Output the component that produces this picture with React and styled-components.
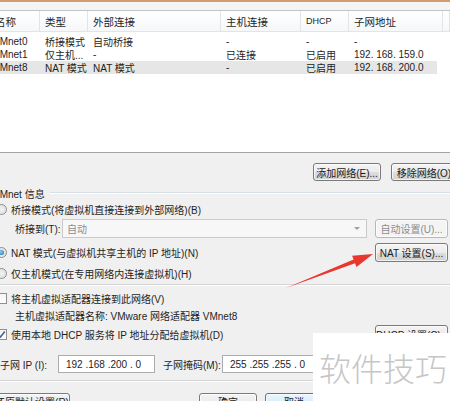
import styled, { createGlobalStyle } from 'styled-components';

const GlobalStyle = createGlobalStyle`
  html, body {
    margin: 0;
    padding: 0;
    background: #f0f0f0;
    overflow: hidden;
  }
`;

const uiFont = `"Liberation Sans", "Noto Sans CJK SC", sans-serif`;

const columns = [
  { title: '名称', width: 52, headPad: 7, pad: 5 },
  { title: '类型', width: 48 },
  { title: '外部连接', width: 133 },
  { title: '主机连接', width: 80 },
  { title: 'DHCP', width: 48, small: true },
  { title: '子网地址', width: 94 },
];

const networks = [
  ['VMnet0', '桥接模式', '自动桥接', '-', '-', '-'],
  ['VMnet1', '仅主机...', '-', '已连接', '已启用', '192. 168. 159.0'],
  ['VMnet8', 'NAT 模式', 'NAT 模式', '-', '已启用', '192. 168. 200.0'],
];

const gridTemplate = columns.map((c) => `${c.width}px`).join(' ') + ' 1fr';

const Window = styled.div`
  position: relative;
  width: 450px;
  height: 401px;
  overflow: hidden;
  background: #f0f0f0;
  font-family: ${uiFont};
  font-size: 10px;
  color: #1e1e1e;
  display: flex;
  flex-direction: column;
`;

const TitleEdge = styled.div`
  height: 2px;
  flex-shrink: 0;
  background: #cf9d70;
`;

const TopGap = styled.div`
  height: 8px;
  flex-shrink: 0;
  background: #f4f4f4;
  border-bottom: 1px solid #c4c4c4;
`;

const ListView = styled.div`
  height: 142px;
  flex-shrink: 0;
  box-sizing: border-box;
  background: #ffffff;
  border-bottom: 1px solid #a3a3a3;
  overflow: hidden;
`;

const HeaderRow = styled.div`
  display: grid;
  grid-template-columns: ${gridTemplate};
  margin-left: -12px;
  height: 20px;
  background: linear-gradient(#ffffff, #f6f7f9);
  border-bottom: 1px solid #e3e4e6;
`;

const HeaderCell = styled.div`
  display: flex;
  align-items: center;
  padding-left: ${(p) => p.$pad ?? 5}px;
  border-right: 1px solid #e3e4e6;
  font-size: ${(p) => (p.$small ? 9 : 10.5)}px;
  white-space: nowrap;
`;

const Rows = styled.div`
  padding-top: 3px;
`;

const DataRow = styled.div`
  display: grid;
  grid-template-columns: ${gridTemplate};
  margin-left: -12px;
  height: 13px;
  background: ${(p) => (p.$selected ? 'linear-gradient(90deg, #e6e6e6 0 449px, transparent 449px)' : 'transparent')};
`;

const Cell = styled.div`
  display: flex;
  align-items: center;
  padding-left: ${(p) => p.$pad ?? 5}px;
  white-space: pre;
  overflow: hidden;
  font-size: 10px;
`;

const Dialog = styled.div`
  display: flex;
  flex-direction: column;
`;

const TopButtons = styled.div`
  display: flex;
  justify-content: flex-end;
  gap: 10px;
  margin-top: 10px;
  margin-right: -7px;
`;

const Button = styled.button`
  flex-shrink: 0;
  width: ${(p) => p.$w}px;
  height: ${(p) => p.$h ?? 18}px;
  padding: 0;
  border-radius: 3px;
  font-family: ${uiFont};
  font-size: 10px;
  white-space: nowrap;
  border: 1px solid ${(p) => (p.$default ? '#3c7fb1' : p.disabled ? '#b5b8bb' : '#7a7a7a')};
  color: ${(p) => (p.disabled ? '#8c8c8c' : '#1a1a1a')};
  background: ${(p) =>
    p.$default
      ? 'linear-gradient(#eaf6fd 0%, #d9f0fc 50%, #bee6fd 51%, #a7d9f5 100%)'
      : p.disabled
      ? '#f4f4f4'
      : 'linear-gradient(#f4f4f4 0%, #ececec 50%, #dedede 51%, #d2d2d2 100%)'};
  box-shadow: inset 0 0 0 1px rgba(255, 255, 255, 0.7);
`;

const Legend = styled.div`
  display: flex;
  align-items: center;
  height: 14px;
  margin-top: 5px;
  margin-left: -7px;

  &::after {
    content: '';
    flex: 1;
    margin-left: 5px;
    height: 1px;
    background: #d5dfe5;
    border-bottom: 1px solid #ffffff;
  }
`;

const OptionRow = styled.div`
  display: flex;
  align-items: center;
  height: ${(p) => p.$h ?? 14}px;
  margin-top: ${(p) => p.$mt ?? 0}px;
  padding-left: ${(p) => p.$indent ?? 0}px;
  padding-right: 2px;
  white-space: nowrap;
`;

const Choice = styled.label`
  display: flex;
  align-items: center;
  gap: 4px;
  margin-left: -4px;
  flex: 1;
`;

const Radio = styled.span`
  width: 11px;
  height: 11px;
  box-sizing: border-box;
  border-radius: 50%;
  border: 1px solid #8e8f8f;
  background: radial-gradient(circle, #f2f2f2, #dcdcdc);
  display: flex;
  align-items: center;
  justify-content: center;

  &::after {
    content: '';
    width: 5px;
    height: 5px;
    border-radius: 50%;
    background: ${(p) => (p.$checked ? 'radial-gradient(circle at 40% 40%, #8ad3f7, #1f5f9c)' : 'transparent')};
  }
`;

const Check = styled.span`
  width: 11px;
  height: 11px;
  box-sizing: border-box;
  border: 1px solid #8e8f8f;
  background: linear-gradient(#f4f4f4, #ffffff);
  display: flex;
  align-items: center;
  justify-content: center;
`;

const SubLabel = styled.span`
  width: ${(p) => p.$w}px;
  flex-shrink: 0;
  margin-left: ${(p) => p.$ml ?? 0}px;
`;

const Combo = styled.div`
  width: 306px;
  height: 19px;
  box-sizing: border-box;
  border: 1px solid #c9cacc;
  background: #f7f7f7;
  color: #8d8d8d;
  display: flex;
  align-items: center;
  justify-content: space-between;
  padding: 0 6px 0 4px;
  margin-right: 8px;
`;

const ComboArrow = styled.span`
  width: 0;
  height: 0;
  border-left: 3px solid transparent;
  border-right: 3px solid transparent;
  border-top: 3px solid #a0a0a0;
`;

const Separator = styled.div`
  height: 1px;
  margin-top: ${(p) => p.$mt}px;
  background: #d5d5d5;
  border-bottom: 1px solid #ffffff;
`;

const IpField = styled.div`
  width: 97px;
  height: 18px;
  box-sizing: border-box;
  flex-shrink: 0;
  border: 1px solid #abadb3;
  background: #ffffff;
  display: flex;
  align-items: center;
  padding-left: 7px;
  white-space: pre;
  font-size: 10px;
`;

const BottomButtons = styled.div`
  display: flex;
  align-items: flex-start;
  margin-top: 11px;
  margin-left: -6px;
  margin-right: -5px;
`;

const ButtonGroup = styled.div`
  display: flex;
  gap: 8px;
  margin-left: auto;
`;

const Watermark = styled.div`
  position: absolute;
  left: 313px;
  top: 333px;
  right: 0;
  bottom: 0;
  background: #ffffff;
  display: flex;
  align-items: center;
  padding-left: 6px;
  font-family: "Noto Sans CJK SC", sans-serif;
  font-weight: 300;
  font-size: 32px;
  color: #c6c6c6;
  white-space: nowrap;
`;

const ArrowMark = styled.svg`
  position: absolute;
  left: 280px;
  top: 245px;
  width: 100px;
  height: 50px;
`;

const CheckMark = () => (
  <svg width="9" height="9" viewBox="0 0 9 9">
    <path d="M1.2 4.6 L3.4 7 L7.8 1.6" fill="none" stroke="#4a5f97" strokeWidth="1.6" />
  </svg>
);

export default function App() {
  return (
    <>
      <GlobalStyle />
      <Window>
        <TitleEdge />
        <TopGap />
        <ListView>
          <HeaderRow>
            {columns.map((c) => (
              <HeaderCell key={c.title} $pad={c.headPad} $small={c.small}>
                {c.title}
              </HeaderCell>
            ))}
            <HeaderCell />
          </HeaderRow>
          <Rows>
            {networks.map((row, i) => (
              <DataRow key={row[0]} $selected={i === 2}>
                {row.map((v, j) => (
                  <Cell key={j} $pad={columns[j].pad}>
                    {v}
                  </Cell>
                ))}
                <Cell />
              </DataRow>
            ))}
          </Rows>
        </ListView>

        <Dialog>
          <TopButtons>
            <Button $w={68}>添加网络(E)...</Button>
            <Button $w={66}>移除网络(O)</Button>
          </TopButtons>

          <Legend>VMnet 信息</Legend>

          <OptionRow $mt={2}>
            <Choice>
              <Radio />
              桥接模式(将虚拟机直接连接到外部网络)(B)
            </Choice>
          </OptionRow>

          <OptionRow $mt={3} $h={19} $indent={15}>
            <SubLabel $w={47}>桥接到(T):</SubLabel>
            <Combo>
              自动
              <ComboArrow />
            </Combo>
            <Button $w={73} $h={19} disabled>
              自动设置(U)...
            </Button>
          </OptionRow>

          <OptionRow $mt={5} $h={19}>
            <Choice>
              <Radio $checked />
              NAT 模式(与虚拟机共享主机的 IP 地址)(N)
            </Choice>
            <Button $w={73} $h={19}>
              NAT 设置(S)...
            </Button>
          </OptionRow>

          <OptionRow $mt={4}>
            <Choice>
              <Radio />
              仅主机模式(在专用网络内连接虚拟机)(H)
            </Choice>
          </OptionRow>

          <Separator $mt={4} />

          <OptionRow $mt={5}>
            <Choice>
              <Check />
              将主机虚拟适配器连接到此网络(V)
            </Choice>
          </OptionRow>

          <OptionRow $mt={3} $indent={15}>
            主机虚拟适配器名称: VMware 网络适配器 VMnet8
          </OptionRow>

          <OptionRow $mt={3} $h={18}>
            <Choice>
              <Check>
                <CheckMark />
              </Check>
              使用本地 DHCP 服务将 IP 地址分配给虚拟机(D)
            </Choice>
            <Button $w={73}>DHCP 设置(C)...</Button>
          </OptionRow>

          <OptionRow $mt={12} $h={18}>
            <SubLabel $w={58}>子网 IP (I):</SubLabel>
            <IpField>{'192 .168 .200 . 0'}</IpField>
            <SubLabel $w={59} $ml={8}>
              子网掩码(M):
            </SubLabel>
            <IpField>{'255 .255 .255 . 0'}</IpField>
          </OptionRow>

          <Separator $mt={7} />

          <BottomButtons>
            <Button $w={76} $h={17}>
              还原默认设置(R)
            </Button>
            <ButtonGroup>
              <Button $w={58} $h={17}>
                确定
              </Button>
              <Button $w={58} $h={17} $default>
                取消
              </Button>
              <Button $w={58} $h={17}>
                应用(A)
              </Button>
              <Button $w={58} $h={17}>
                帮助
              </Button>
            </ButtonGroup>
          </BottomButtons>
        </Dialog>

        <ArrowMark viewBox="0 0 100 50">
          <polygon points="6,43 75,18.2 76.5,21.9 93,9 72.1,10.7 73.6,14.4" fill="#e8372c" />
        </ArrowMark>

        <Watermark>软件技巧</Watermark>
      </Window>
    </>
  );
}
